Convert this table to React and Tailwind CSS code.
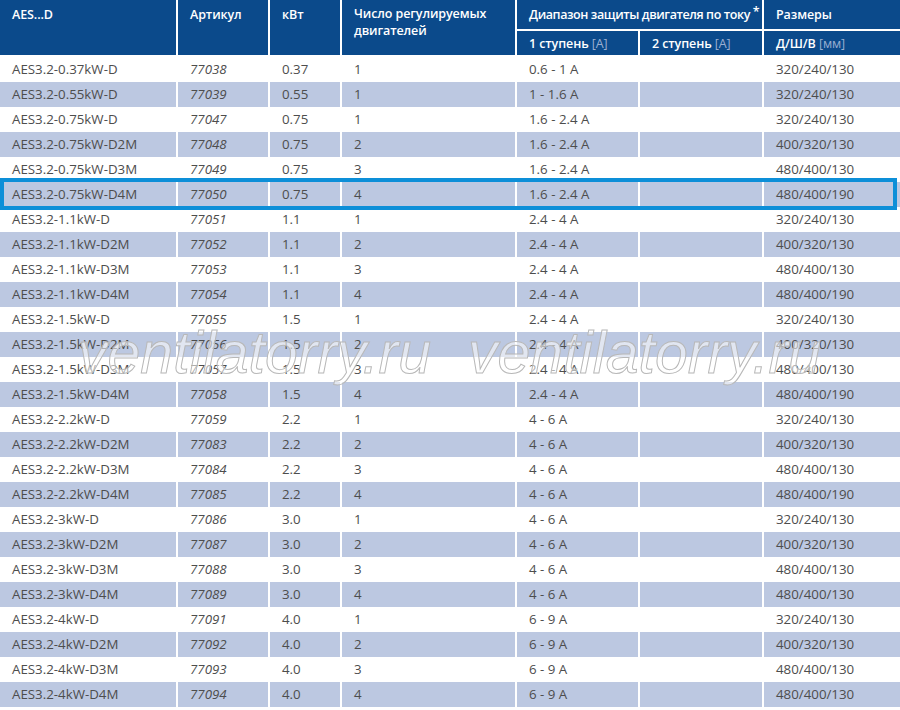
import React from "react";

const rows = [
  ["AES3.2-0.37kW-D", "77038", "0.37", "1", "0.6 - 1 A", "320/240/130"],
  ["AES3.2-0.55kW-D", "77039", "0.55", "1", "1 - 1.6 A", "320/240/130"],
  ["AES3.2-0.75kW-D", "77047", "0.75", "1", "1.6 - 2.4 A", "320/240/130"],
  ["AES3.2-0.75kW-D2M", "77048", "0.75", "2", "1.6 - 2.4 A", "400/320/130"],
  ["AES3.2-0.75kW-D3M", "77049", "0.75", "3", "1.6 - 2.4 A", "480/400/130"],
  ["AES3.2-0.75kW-D4M", "77050", "0.75", "4", "1.6 - 2.4 A", "480/400/190"],
  ["AES3.2-1.1kW-D", "77051", "1.1", "1", "2.4 - 4 A", "320/240/130"],
  ["AES3.2-1.1kW-D2M", "77052", "1.1", "2", "2.4 - 4 A", "400/320/130"],
  ["AES3.2-1.1kW-D3M", "77053", "1.1", "3", "2.4 - 4 A", "480/400/130"],
  ["AES3.2-1.1kW-D4M", "77054", "1.1", "4", "2.4 - 4 A", "480/400/190"],
  ["AES3.2-1.5kW-D", "77055", "1.5", "1", "2.4 - 4 A", "320/240/130"],
  ["AES3.2-1.5kW-D2M", "77056", "1.5", "2", "2.4 - 4 A", "400/320/130"],
  ["AES3.2-1.5kW-D3M", "77057", "1.5", "3", "2.4 - 4 A", "480/400/130"],
  ["AES3.2-1.5kW-D4M", "77058", "1.5", "4", "2.4 - 4 A", "480/400/190"],
  ["AES3.2-2.2kW-D", "77059", "2.2", "1", "4 - 6 A", "320/240/130"],
  ["AES3.2-2.2kW-D2M", "77083", "2.2", "2", "4 - 6 A", "400/320/130"],
  ["AES3.2-2.2kW-D3M", "77084", "2.2", "3", "4 - 6 A", "480/400/130"],
  ["AES3.2-2.2kW-D4M", "77085", "2.2", "4", "4 - 6 A", "480/400/190"],
  ["AES3.2-3kW-D", "77086", "3.0", "1", "4 - 6 A", "320/240/130"],
  ["AES3.2-3kW-D2M", "77087", "3.0", "2", "4 - 6 A", "400/320/130"],
  ["AES3.2-3kW-D3M", "77088", "3.0", "3", "4 - 6 A", "480/400/130"],
  ["AES3.2-3kW-D4M", "77089", "3.0", "4", "4 - 6 A", "480/400/130"],
  ["AES3.2-4kW-D", "77091", "4.0", "1", "6 - 9 A", "320/240/130"],
  ["AES3.2-4kW-D2M", "77092", "4.0", "2", "6 - 9 A", "400/320/130"],
  ["AES3.2-4kW-D3M", "77093", "4.0", "3", "6 - 9 A", "480/400/130"],
  ["AES3.2-4kW-D4M", "77094", "4.0", "4", "6 - 9 A", "480/400/130"],
];

const grid =
  "grid grid-cols-[176px_90px_70px_173px_121px_122px_136px] gap-x-[2px]";

function Row({ r, i }) {
  const blue = i % 2 === 1;
  const bg = blue ? "bg-[#bcc8e1]" : "bg-white";
  const cell = `${bg} h-[25px] flex items-center pl-[12px] whitespace-nowrap`;
  const highlighted = i === 5;
  return (
    <div className={`relative ${grid}`}>
      <div className={cell}>{r[0]}</div>
      <div className={`${cell} italic`}>{r[1]}</div>
      <div className={`${cell} pl-[11px]`}>{r[2]}</div>
      <div className={cell}>{r[3]}</div>
      <div className={`${cell} pl-[11px]`}>{r[4]}</div>
      <div className={cell}></div>
      <div className={cell}>{r[5]}</div>
      {highlighted && (
        <div className="absolute z-10 left-0 right-[3px] top-[-4px] bottom-[-3px] border-[4px] border-[#0d8fd8] pointer-events-none" />
      )}
    </div>
  );
}

function Watermark({ left }) {
  return (
    <div
      className={`absolute z-20 ${left} top-[324px] text-[59px] leading-none italic text-[rgba(255,255,255,0.55)] [-webkit-text-stroke:1px_#b8b8b8] pointer-events-none whitespace-nowrap`}
      style={{ fontFamily: '"Liberation Sans", sans-serif' }}
    >
      ventilatorry.ru
    </div>
  );
}

export default function App() {
  const hd = "bg-[#0b4a8b] text-white font-semibold pl-[12px]";
  return (
    <div
      className="relative w-[900px] h-[710px] overflow-hidden bg-white text-[13.3px] text-[#4d4d4d]"
      style={{ fontFamily: '"Open Sans", "Noto Sans", sans-serif' }}
    >
      <div
        className={`${grid} grid-rows-[29px_24px] gap-y-[2px] leading-[17px] text-[12.5px] tracking-[-0.1px]`}
      >
        <div className={`${hd} row-span-2 pt-[6px]`}>AES...D</div>
        <div className={`${hd} row-span-2 pt-[6px]`}>Артикул</div>
        <div className={`${hd} row-span-2 pt-[6px] pl-[11px]`}>кВт</div>
        <div className={`${hd} row-span-2 pt-[5px]`}>
          Число регулируемых
          <br />
          двигателей
        </div>
        <div
          className={`${hd} col-span-2 pt-[6px] pl-[11px] whitespace-nowrap tracking-[-0.4px]`}
        >
          Диапазон защиты двигателя по току{" "}
          <span className="relative top-[-3px]">*</span>
        </div>
        <div className={`${hd} pt-[6px]`}>Размеры</div>
        <div className={`${hd} pt-[4px] pl-[11px] whitespace-nowrap`}>
          1 ступень <span className="font-normal text-[#9bb0d2]">[A]</span>
        </div>
        <div className={`${hd} pt-[4px] whitespace-nowrap`}>
          2 ступень <span className="font-normal text-[#9bb0d2]">[A]</span>
        </div>
        <div className={`${hd} pt-[4px] whitespace-nowrap`}>
          Д/Ш/В <span className="font-normal text-[#9bb0d2]">[мм]</span>
        </div>
      </div>
      <div className="h-[2px]" />
      {rows.map((r, i) => (
        <Row key={i} r={r} i={i} />
      ))}
      <Watermark left="left-[78px]" />
      <Watermark left="left-[468px]" />
    </div>
  );
}
